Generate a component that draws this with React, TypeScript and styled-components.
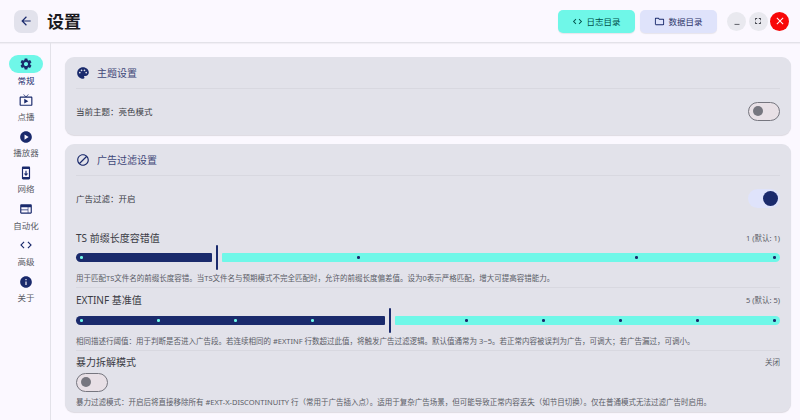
import React from "react";
import styled, { createGlobalStyle } from "styled-components";
import {
  MdArrowBack,
  MdBlock,
  MdClose,
  MdCode,
  MdFullscreen,
  MdInfo,
  MdMinimize,
  MdOutlineFolder,
  MdOutlineLiveTv,
  MdWeb,
  MdPalette,
  MdPlayCircle,
  MdSettings,
  MdSystemUpdate,
} from "react-icons/md";

const GlobalStyle = createGlobalStyle`
  html, body, #root {
    margin: 0;
    height: 100%;
  }
  body {
    overflow: hidden;
    background: #fbf8ff;
    color: #1b1b21;
    font-family: "Noto Sans", "Noto Sans CJK SC", sans-serif;
  }
`;

const Page = styled.div`
  width: 800px;
  height: 420px;
  display: flex;
  flex-direction: column;
  overflow: hidden;
`;

const Header = styled.header`
  flex: none;
  height: 42px;
  display: flex;
  align-items: center;
  padding: 0 11px 0 14px;
  border-bottom: 1px solid #e3e2e9;
  box-shadow: 0 1px 1px rgba(0, 0, 0, 0.04);
`;

const BackButton = styled.button`
  width: 24px;
  height: 23px;
  padding: 0;
  border: 0;
  border-radius: 7px;
  background: #e2e2ec;
  color: #1a2a6c;
  display: flex;
  align-items: center;
  justify-content: center;
  font-size: 14px;
`;

const Title = styled.h1`
  margin: 0 0 0 9px;
  font-size: 17px;
  font-weight: 700;
  line-height: 1;
  flex: 1;
`;

const DirButton = styled.button<{ $accent?: boolean }>`
  width: 77px;
  height: 23px;
  margin-right: 5px;
  padding: 0;
  border: 0;
  border-radius: 5px;
  background: ${(p) => (p.$accent ? "#6ff7e8" : "#dfe3fb")};
  color: ${(p) => (p.$accent ? "#00504a" : "#2b3369")};
  box-shadow: 0 1px 1px rgba(0, 0, 0, 0.08);
  display: flex;
  align-items: center;
  justify-content: center;
  gap: 3px;
  font-family: inherit;
  font-size: 8.5px;
  svg {
    font-size: 11px;
    color: ${(p) => (p.$accent ? "#00504a" : "#1a2a6c")};
  }
`;

const WindowGroup = styled.div`
  margin-left: 5px;
  display: flex;
  gap: 2.5px;
`;

const WindowButton = styled.button<{ $close?: boolean }>`
  width: 19px;
  height: 19px;
  padding: 0;
  border: 0;
  border-radius: 50%;
  background: ${(p) => (p.$close ? "#f80808" : "#e9e9ef")};
  color: ${(p) => (p.$close ? "#ffffff" : "#44464f")};
  display: flex;
  align-items: center;
  justify-content: center;
  font-size: ${(p) => (p.$close ? 12 : 10)}px;
`;

const Body = styled.div`
  flex: 1;
  min-height: 0;
  display: flex;
`;

const Sidebar = styled.nav`
  flex: none;
  width: 51px;
  box-sizing: border-box;
  padding: 12px 0 0 2px;
  border-right: 1px solid #e3e2e9;
  display: flex;
  flex-direction: column;
  align-items: center;
`;

const NavItem = styled.div`
  height: 36.3px;
  display: flex;
  flex-direction: column;
  align-items: center;
`;

const NavIcon = styled.div<{ $active?: boolean }>`
  width: 34px;
  height: 18px;
  border-radius: 9px;
  background: ${(p) => (p.$active ? "#6ff7e8" : "transparent")};
  color: #1a2a6c;
  display: flex;
  align-items: center;
  justify-content: center;
  font-size: 14px;
`;

const NavLabel = styled.span<{ $active?: boolean }>`
  margin-top: 1.5px;
  font-size: 8.5px;
  line-height: 12px;
  color: ${(p) => (p.$active ? "#1a2a6c" : "#5a5c66")};
`;

const Content = styled.main`
  flex: 1;
  min-width: 0;
  padding: 14px 9px 0 14px;
  display: flex;
  flex-direction: column;
  gap: 9px;
`;

const Card = styled.section`
  flex: none;
  border-radius: 9px;
  background: #e2e2ea;
  padding: 0 11px;
  box-shadow: 0 1px 1px rgba(0, 0, 0, 0.12);
`;

const CardHead = styled.div`
  height: 31px;
  display: flex;
  align-items: center;
  gap: 7px;
  border-bottom: 1px solid #d8d8e0;
  font-size: 10px;
  color: #3f4778;
  svg {
    font-size: 14px;
    color: #1a2a6c;
  }
`;

const ToggleRow = styled.div<{ $gap: number }>`
  height: 44px;
  margin-bottom: ${(p) => p.$gap}px;
  display: flex;
  align-items: center;
  justify-content: space-between;
  font-size: 8.5px;
  color: #3a3b44;
`;

const Switch = styled.div<{ $on?: boolean }>`
  width: 32px;
  height: 19px;
  box-sizing: border-box;
  border-radius: 10px;
  background: ${(p) => (p.$on ? "#dfe3fb" : "#e8e0e6")};
  border: ${(p) => (p.$on ? "0" : "1.5px solid #76767f")};
  display: flex;
  align-items: center;
  justify-content: ${(p) => (p.$on ? "flex-end" : "flex-start")};
  padding: 0 2px 0 4px;
  &::after {
    content: "";
    width: ${(p) => (p.$on ? 15 : 10)}px;
    height: ${(p) => (p.$on ? 15 : 10)}px;
    border-radius: 50%;
    background: ${(p) => (p.$on ? "#1a2a6c" : "#76767f")};
  }
`;

const Setting = styled.div<{ $last?: boolean }>`
  padding: ${(p) => (p.$last ? "2px 0 3px" : "3px 0 2px")};
  border-bottom: ${(p) => (p.$last ? "0" : "1px solid #d8d8e0")};
`;

const SettingHead = styled.div`
  display: flex;
  align-items: center;
  justify-content: space-between;
  height: 16px;
`;

const SettingTitle = styled.span`
  font-size: 10px;
  color: #3a3b44;
`;

const SettingValue = styled.span`
  font-size: 7.5px;
  color: #5a5c66;
`;

const Desc = styled.p<{ $top: number }>`
  margin: ${(p) => p.$top}px 0 0;
  height: 14px;
  font-size: 7.5px;
  line-height: 14px;
  color: #5a5c66;
  white-space: nowrap;
`;

const SliderRow = styled.div<{ $top: number }>`
  height: 26px;
  margin-top: ${(p) => p.$top}px;
  display: flex;
  align-items: center;
  position: relative;
`;

const Track = styled.div<{ $active?: boolean }>`
  height: 9px;
  background: ${(p) => (p.$active ? "#1a2a6c" : "#6ff7e8")};
  border-radius: ${(p) => (p.$active ? "5px 1px 1px 5px" : "1px 5px 5px 1px")};
`;

const Thumb = styled.div`
  flex: none;
  width: 2.5px;
  height: 25px;
  margin: 0 3.75px;
  background: #1a2a6c;
  border-radius: 1px;
`;

const Stop = styled.i<{ $on?: boolean }>`
  position: absolute;
  top: 12px;
  width: 2.5px;
  height: 2.5px;
  border-radius: 50%;
  background: ${(p) => (p.$on ? "#6ff7e8" : "#1a2a6c")};
`;

const ModeSwitch = styled.div`
  margin-top: 3.5px;
`;

interface SliderProps {
  activeWidth: number;
  stops: number[];
  top: number;
}

const Slider: React.FC<SliderProps> = ({ activeWidth, stops, top }) => (
  <SliderRow $top={top}>
    <Track $active style={{ width: activeWidth }} />
    <Thumb />
    <Track style={{ flex: 1 }} />
    {stops.map((x) => (
      <Stop key={x} $on={x < activeWidth} style={{ left: x }} />
    ))}
  </SliderRow>
);

const nav = [
  { label: "常规", icon: <MdSettings />, active: true },
  { label: "点播", icon: <MdOutlineLiveTv /> },
  { label: "播放器", icon: <MdPlayCircle /> },
  { label: "网络", icon: <MdSystemUpdate /> },
  { label: "自动化", icon: <MdWeb /> },
  { label: "高级", icon: <MdCode /> },
  { label: "关于", icon: <MdInfo /> },
];

export default function App() {
  return (
    <Page>
      <GlobalStyle />
      <Header>
        <BackButton>
          <MdArrowBack />
        </BackButton>
        <Title>设置</Title>
        <DirButton $accent>
          <MdCode />
          日志目录
        </DirButton>
        <DirButton>
          <MdOutlineFolder />
          数据目录
        </DirButton>
        <WindowGroup>
          <WindowButton>
            <MdMinimize />
          </WindowButton>
          <WindowButton>
            <MdFullscreen />
          </WindowButton>
          <WindowButton $close>
            <MdClose />
          </WindowButton>
        </WindowGroup>
      </Header>
      <Body>
        <Sidebar>
          {nav.map((n) => (
            <NavItem key={n.label}>
              <NavIcon $active={n.active}>{n.icon}</NavIcon>
              <NavLabel $active={n.active}>{n.label}</NavLabel>
            </NavItem>
          ))}
        </Sidebar>
        <Content>
          <Card>
            <CardHead>
              <MdPalette />
              主题设置
            </CardHead>
            <ToggleRow $gap={2}>
              当前主题：亮色模式
              <Switch />
            </ToggleRow>
          </Card>
          <Card>
            <CardHead>
              <MdBlock />
              广告过滤设置
            </CardHead>
            <ToggleRow $gap={6}>
              广告过滤：开启
              <Switch $on />
            </ToggleRow>
            <Setting>
              <SettingHead>
                <SettingTitle>TS 前缀长度容错值</SettingTitle>
                <SettingValue>1 (默认: 1)</SettingValue>
              </SettingHead>
              <Slider top={-1} activeWidth={136} stops={[4, 281, 559, 697]} />
              <Desc $top={1}>
                用于匹配TS文件名的前缀长度容错。当TS文件名与预期模式不完全匹配时，允许的前缀长度偏差值。设为0表示严格匹配，增大可提高容错能力。
              </Desc>
            </Setting>
            <Setting>
              <SettingHead>
                <SettingTitle>EXTINF 基准值</SettingTitle>
                <SettingValue>5 (默认: 5)</SettingValue>
              </SettingHead>
              <Slider
                top={0}
                activeWidth={309}
                stops={[4, 81, 158, 235, 389, 466, 543, 620, 697]}
              />
              <Desc $top={1}>
                相同描述行阈值：用于判断是否进入广告段。若连续相同的 #EXTINF 行数超过此值，将触发广告过滤逻辑。默认值通常为 3~5。若正常内容被误判为广告，可调大；若广告漏过，可调小。
              </Desc>
            </Setting>
            <Setting $last>
              <SettingHead>
                <SettingTitle>暴力拆解模式</SettingTitle>
                <SettingValue>关闭</SettingValue>
              </SettingHead>
              <ModeSwitch>
                <Switch />
              </ModeSwitch>
              <Desc $top={3}>
                暴力过滤模式：开启后将直接移除所有 #EXT-X-DISCONTINUITY 行（常用于广告插入点）。适用于复杂广告场景，但可能导致正常内容丢失（如节目切换）。仅在普通模式无法过滤广告时启用。
              </Desc>
            </Setting>
          </Card>
        </Content>
      </Body>
    </Page>
  );
}
